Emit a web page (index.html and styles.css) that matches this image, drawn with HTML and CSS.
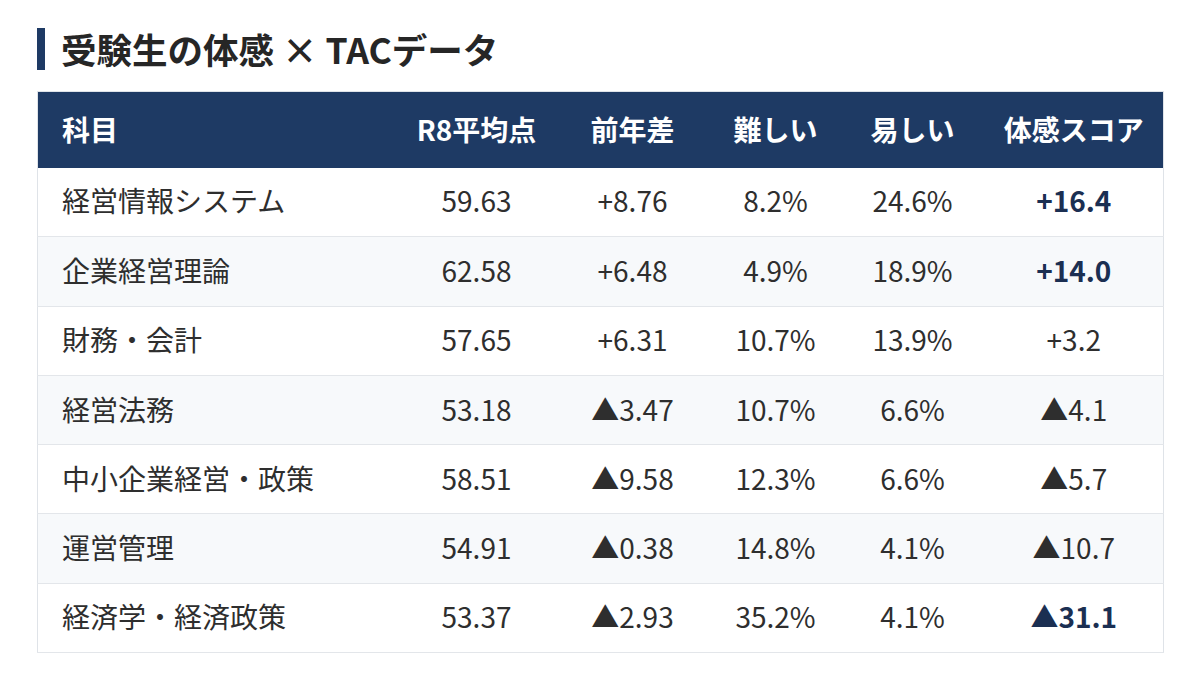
FILE: index.html
```html
<!DOCTYPE html>
<html lang="ja">
<head>
<meta charset="utf-8">
<title>受験生の体感 × TACデータ</title>
<link rel="stylesheet" href="styles.css">
</head>
<body>
<div class="page">
  <h2 class="title">受験生の体感 × TACデータ</h2>
  <table class="data">
    <colgroup>
      <col class="c1"><col class="c2"><col class="c3"><col class="c4"><col class="c5"><col class="c6">
    </colgroup>
    <thead>
      <tr><th class="name">科目</th><th>R8平均点</th><th>前年差</th><th>難しい</th><th>易しい</th><th>体感スコア</th></tr>
    </thead>
    <tbody>
      <tr><td class="name">経営情報システム</td><td>59.63</td><td>+8.76</td><td>8.2%</td><td>24.6%</td><td class="hl">+16.4</td></tr>
      <tr><td class="name">企業経営理論</td><td>62.58</td><td>+6.48</td><td>4.9%</td><td>18.9%</td><td class="hl">+14.0</td></tr>
      <tr><td class="name">財務・会計</td><td>57.65</td><td>+6.31</td><td>10.7%</td><td>13.9%</td><td>+3.2</td></tr>
      <tr><td class="name">経営法務</td><td>53.18</td><td>▲3.47</td><td>10.7%</td><td>6.6%</td><td>▲4.1</td></tr>
      <tr><td class="name">中小企業経営・政策</td><td>58.51</td><td>▲9.58</td><td>12.3%</td><td>6.6%</td><td>▲5.7</td></tr>
      <tr><td class="name">運営管理</td><td>54.91</td><td>▲0.38</td><td>14.8%</td><td>4.1%</td><td>▲10.7</td></tr>
      <tr><td class="name">経済学・経済政策</td><td>53.37</td><td>▲2.93</td><td>35.2%</td><td>4.1%</td><td class="hl">▲31.1</td></tr>
    </tbody>
  </table>
</div>
</body>
</html>
```

FILE: styles.css
```css
* { box-sizing: border-box; }
html, body { margin: 0; padding: 0; background: #ffffff; }
body {
  font-family: "Noto Sans CJK JP", "Noto Sans", sans-serif;
  color: #2e2e2e;
}
.page {
  padding: 28px 37px 0 37px;
  width: 1200px;
}
.title {
  margin: 0 0 21px 0;
  border-left: 8px solid #1e3a64;
  padding-left: 16px;
  height: 42px;
  line-height: 42px;
  font-size: 35.5px;
  font-weight: 700;
  color: #262626;
  letter-spacing: 0;
}
.data {
  width: 1126px;
  border-collapse: collapse;
  table-layout: fixed;
  border: 1px solid #dfe3e8;
}
.c1 { width: 361px; }
.c2 { width: 156px; }
.c3 { width: 156px; }
.c4 { width: 130px; }
.c5 { width: 144px; }
.c6 { width: 179px; }
.data th {
  background: #1e3a64;
  color: #ffffff;
  font-weight: 700;
  font-size: 28px;
  height: 76px;
  text-align: center;
  padding: 0 0 2px 0;
}
.data td {
  font-size: 28px;
  height: 69.3px;
  text-align: center;
  padding: 0 0 3px 0;
  border-bottom: 1px solid #e3e6ea;
  color: #2e2e2e;
}
.data .name {
  text-align: left;
  padding-left: 24px;
}
.data tbody tr:nth-child(even) td { background: #f7f9fb; }
.data td.hl {
  font-weight: 700;
  color: #1b2f52;
}
```
